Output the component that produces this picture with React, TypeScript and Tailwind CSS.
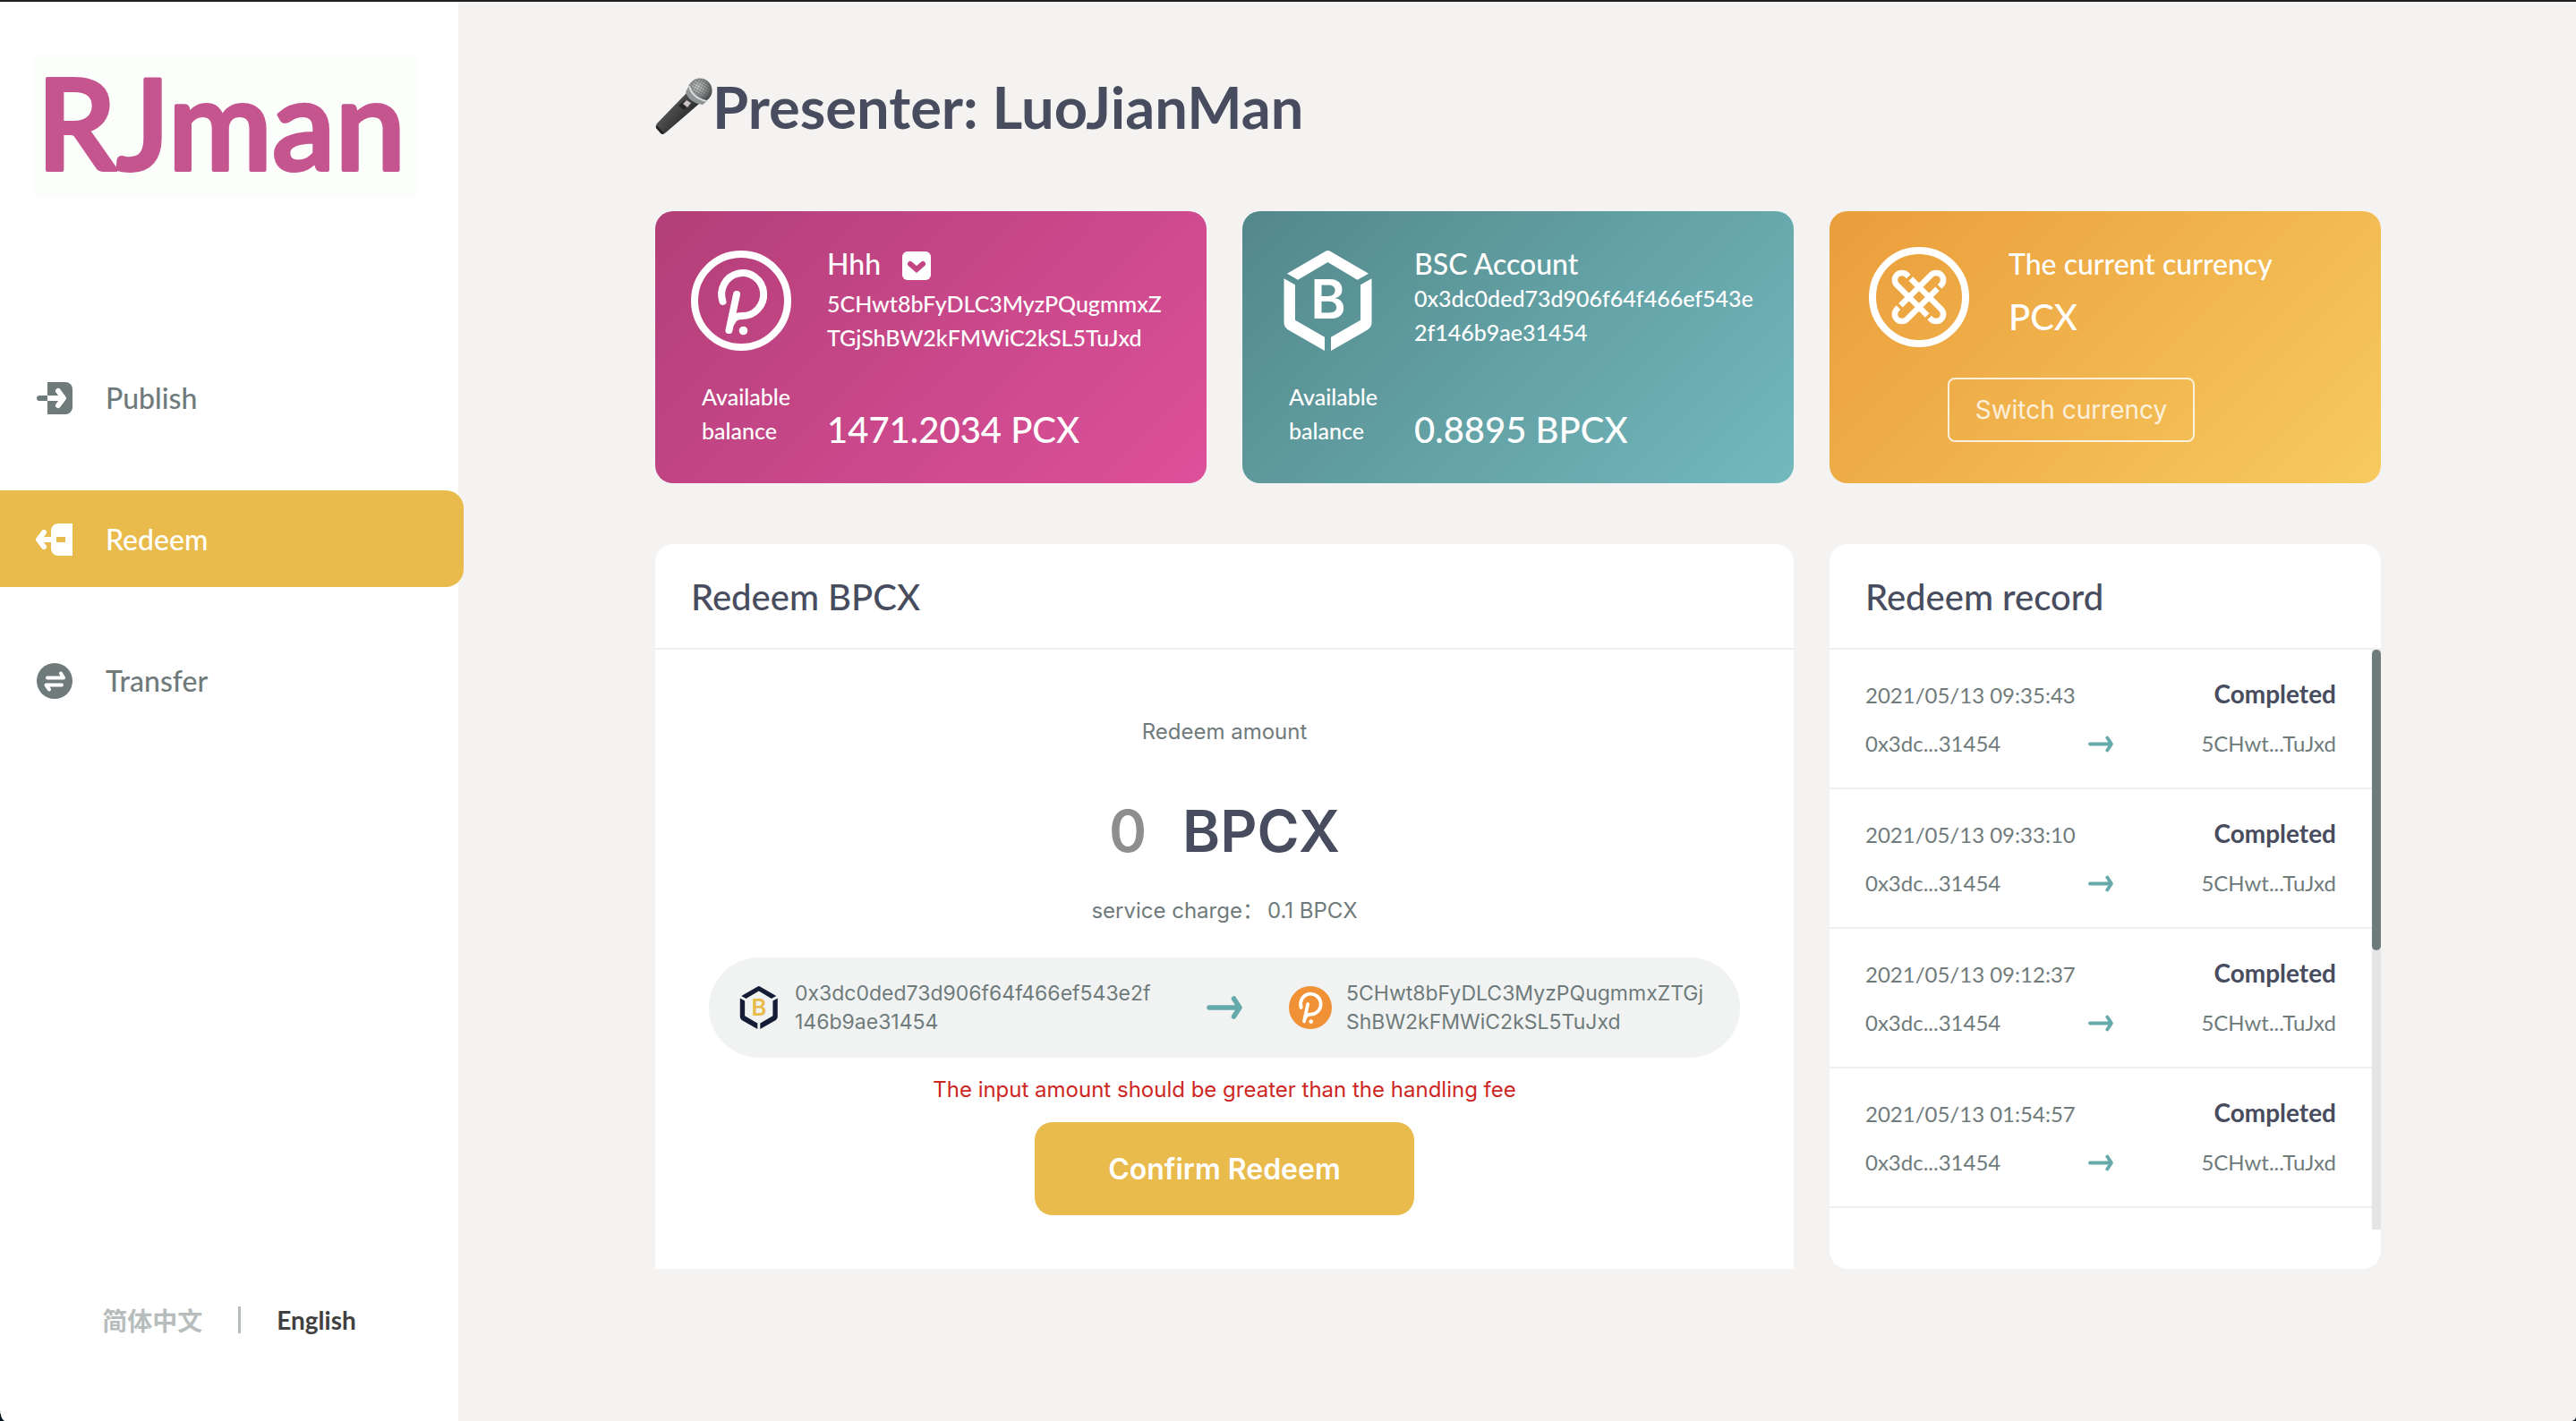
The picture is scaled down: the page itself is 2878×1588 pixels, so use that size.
import React from "react";

const lato = "font-['Lato',sans-serif]";
const inter = "font-['Inter','Noto_Sans_CJK_SC',sans-serif]";

function LogoMark() {
  return (
    <svg viewBox="0 0 428 160" className="h-[160px] w-[428px] overflow-visible bg-[#fcfefc]" role="img" aria-label="RJman">
      <text
        x="3"
        y="128"
        fontSize="140"
        fontWeight="600"
        fill="#c5558f"
        stroke="#c5558f"
        strokeWidth="4"
        strokeLinejoin="round"
        className="font-['Lato',sans-serif]"
      >
        RJman
      </text>
    </svg>
  );
}

function PublishIcon() {
  return (
    <svg viewBox="-1 -3 42 42" className="size-[42px]" fill="none" strokeLinecap="round" strokeLinejoin="round" aria-hidden="true">
      <path d="M12 0H32A8 8 0 0 1 40 8V28A8 8 0 0 1 32 36H12Z" fill="#6f7b7b" />
      <path d="M3 18H9" stroke="#6f7b7b" strokeWidth="6" />
      <path d="M9 15H12V21H9Z" fill="#6f7b7b" />
      <path d="M12 15H27V21H12Z" fill="#fff" />
      <path d="M24 10L30 18L24 26" stroke="#fff" strokeWidth="6" />
      <path d="M25 14L30 18L25 22Z" fill="#fff" />
    </svg>
  );
}

function RedeemIcon() {
  return (
    <svg viewBox="0 -3 42 42" className="size-[42px]" fill="none" strokeLinecap="round" strokeLinejoin="round" aria-hidden="true">
      <path fillRule="evenodd" d="M41 0H25A8 8 0 0 0 17 8V28A8 8 0 0 0 25 36H41ZM23 15H33V21H23Z" fill="#fff" />
      <path d="M4 15H18V21H4Z" fill="#fff" />
      <path d="M9 10L3 18L9 26" stroke="#fff" strokeWidth="6" />
      <path d="M8 14L3 18L8 22Z" fill="#fff" />
    </svg>
  );
}

function TransferIcon() {
  return (
    <svg viewBox="-1 -1 42 42" className="size-[42px]" fill="none" strokeLinecap="round" strokeLinejoin="round" aria-hidden="true">
      <circle cx="20" cy="20" r="20" fill="#6f7b7b" />
      <path d="M12 16.500H30L27 11.500" stroke="#fff" strokeWidth="4" />
      <path d="M28 24.500H10.500L14 29.500" stroke="#fff" strokeWidth="4" />
    </svg>
  );
}

function PolkadotGlyph() {
  return (
    <g>
      <path
        d="M35.500 57A23.500 24 0 1 1 57 73C51 73 47.500 75 45.500 80"
        fill="none"
        stroke="#fff"
        strokeWidth="8"
        strokeLinecap="round"
      />
      <path d="M51 49L42.500 89" fill="none" stroke="#fff" strokeWidth="8" strokeLinecap="round" />
      <circle cx="58.500" cy="89.500" r="4.800" fill="#fff" />
    </g>
  );
}

function PolkadotRing() {
  return (
    <svg viewBox="0 0 112 112" className="size-28 shrink-0" aria-hidden="true">
      <circle cx="56" cy="56" r="52" fill="none" stroke="#fff" strokeWidth="8" />
      <PolkadotGlyph />
    </svg>
  );
}

function PolkadotBadge() {
  return (
    <svg viewBox="0 0 112 112" className="size-12 shrink-0" aria-hidden="true">
      <circle cx="56" cy="56" r="56" fill="#f19135" />
      <g transform="translate(56 56) scale(1.12) translate(-57 -57)">
        <PolkadotGlyph />
      </g>
    </svg>
  );
}

function BscIcon({ className, frame, letter }: { className: string; frame: string; letter: string }) {
  return (
    <svg viewBox="0 0 112 112" className={className} aria-hidden="true">
      <g fill={frame}>
        <path d="M52.500 1Q55.500 -1 58.500 1L101 25.700L88.500 32.700L55.500 13L22 32.700L10 25.700Z" />
        <path d="M6.500 31.300L19 38.300V77.700L52 96.700V112L11 88.500Q6.500 85.500 6.500 80Z" />
        <path d="M104.500 31.300L92 38.300V77.700L59 96.700V112L100 88.500Q104.500 85.500 104.500 80Z" />
      </g>
      <text x="56" y="76" textAnchor="middle" fontSize="60" fontWeight="600" fill={letter} className="font-['Inter',sans-serif]">
        B
      </text>
    </svg>
  );
}

function ChainIcon() {
  const link = "M-21 -8H27A8 8 0 0 1 27 8H24.500M21 8H-27A8 8 0 0 1 -27 -8H-24.500";
  return (
    <svg viewBox="0 0 112 112" className="size-28 shrink-0" fill="none" stroke="#fff" aria-hidden="true">
      <circle cx="56" cy="56" r="52" strokeWidth="8" />
      <path d={link} strokeWidth="6.500" transform="translate(56 56) rotate(45)" />
      <path d={link} strokeWidth="6.500" transform="translate(56 56) rotate(-45)" />
    </svg>
  );
}

function Arrow({ className }: { className: string }) {
  return (
    <svg viewBox="0 0 40 26" className={className} fill="none" stroke="#66a9ab" strokeWidth="5.500" strokeLinecap="round" strokeLinejoin="round" aria-hidden="true">
      <path d="M3 13H36" />
      <path d="M30.500 3L37 13L30.500 23" />
    </svg>
  );
}

function Microphone() {
  return (
    <svg viewBox="0 0 64 64" className="size-16 shrink-0" role="img" aria-label="Microphone">
      <defs>
        <linearGradient id="mic-body" x1="0" y1="0" x2="1" y2="0.800">
          <stop offset="0" stopColor="#6b6b6b" />
          <stop offset="0.450" stopColor="#4a4a4a" />
          <stop offset="1" stopColor="#171717" />
        </linearGradient>
        <radialGradient id="mic-head" cx="0.400" cy="0.350" r="0.700">
          <stop offset="0" stopColor="#d2d4d4" />
          <stop offset="0.550" stopColor="#8b8e8e" />
          <stop offset="1" stopColor="#3f4242" />
        </radialGradient>
        <pattern id="mic-mesh" width="3" height="3" patternUnits="userSpaceOnUse" patternTransform="rotate(30)">
          <path d="M0 0H3M0 0V3" stroke="#3c3f3f" strokeWidth="1" />
        </pattern>
      </defs>
      <path d="M35 17L49 29L12 61Q9 64 7 62L1 56Q0 54 2 51Z" fill="url(#mic-body)" />
      <path d="M1.500 53L10 62Q8 64 6 62L1 56Z" fill="#222" />
      <circle cx="50" cy="14" r="13.500" fill="url(#mic-head)" />
      <circle cx="50" cy="14" r="13.500" fill="url(#mic-mesh)" opacity="0.700" />
      <path d="M38 8Q41 22 58 26L53 30Q38 28 34 16Z" fill="#8f9494" />
      <path d="M38 9Q41 22 57 26" fill="none" stroke="#d9dddd" strokeWidth="2" />
      <path d="M33 25L38 29L32 36L26 31Z" fill="#262626" />
      <path d="M35 25L40 28L36 33L31 29Z" fill="#c9c3c5" />
    </svg>
  );
}

const navItems = [
  { label: "Publish", Icon: PublishIcon, active: false },
  { label: "Redeem", Icon: RedeemIcon, active: true },
  { label: "Transfer", Icon: TransferIcon, active: false },
];

function Sidebar() {
  return (
    <aside className="z-10 flex w-[512px] shrink-0 flex-col rounded-bl-[6px_15px] bg-white">
      <div className="px-[38px] pt-[60px]">
        <LogoMark />
      </div>
      <nav className="mt-[168px] flex flex-col gap-[50px]">
        {navItems.map(({ label, Icon, active }) => (
          <a
            key={label}
            href={"#" + label.toLowerCase()}
            aria-current={active ? "page" : undefined}
            className={
              active
                ? "-mr-[6px] flex h-[108px] items-center gap-9 rounded-r-[20px] bg-[#e9bb4c] pt-0.5 pl-10 text-[32px] leading-[38px] font-medium text-white"
                : "flex h-[108px] items-center gap-9 pt-0.5 pl-10 text-[32px] leading-[38px] font-medium text-[#6f7b7b]"
            }
          >
            <Icon />
            <span>{label}</span>
          </a>
        ))}
      </nav>
      <div className="mt-auto flex items-center justify-center gap-10 pb-24 text-[28px] leading-[34px] font-bold">
        <button type="button" className="font-['Noto_Sans_CJK_SC',sans-serif] text-[#b6bdbc]">简体中文</button>
        <span className="h-[30px] w-[3px] bg-[#b6bdbc]" />
        <button type="button" className="text-[#404040]">English</button>
      </div>
    </aside>
  );
}

function AccountCard({
  tone,
  icon,
  title,
  address,
  balance,
}: {
  tone: string;
  icon: React.ReactNode;
  title: React.ReactNode;
  address: string[];
  balance: string;
}) {
  return (
    <section className={"h-[304px] rounded-[20px] pt-10 font-medium text-white " + tone}>
      <div className="flex min-h-[148px] gap-10 pl-10">
        <div className="pt-1">{icon}</div>
        <div>
          {title}
          {address.map((line) => (
            <p key={line} className="text-[25px] leading-[38px]">{line}</p>
          ))}
        </div>
      </div>
      <div className="flex pl-[52px]">
        <p className="w-[140px] text-[25px] leading-[38px]">
          Available
          <br />
          balance
        </p>
        <p className="pt-8 text-[40px] leading-[48px]">{balance}</p>
      </div>
    </section>
  );
}

const records = ["2021/05/13 09:35:43", "2021/05/13 09:33:10", "2021/05/13 09:12:37", "2021/05/13 01:54:57"];

export default function App() {
  return (
    <div className={"flex min-h-screen border-t-2 border-[#1f1f1f] bg-[#04141c] " + lato}>
      <div className="flex flex-1 rounded-br-[5px] rounded-bl-[6px_15px] bg-[#f4f3f1]">
        <Sidebar />
        <main className="flex-1 pt-[78px] pr-[218px] pl-[220px]">
          <div className="mx-auto w-full max-w-[1928px]">
            <h1 className="flex items-center text-[65px] leading-[78px] font-bold text-[#474c5e]">
              <Microphone />
              <span>Presenter: LuoJianMan</span>
            </h1>

            <div className="mt-[78px] grid grid-cols-3 gap-10">
              <AccountCard
                tone="bg-[linear-gradient(135deg,#b23f78,#de509b)]"
                icon={<PolkadotRing />}
                title={
                  <div className="mb-[6px] flex h-[38px] items-center gap-6">
                    <h2 className="text-[32px] leading-[38px]">Hhh</h2>
                    <button type="button" aria-label="Choose account" className="mt-1">
                      <svg viewBox="0 0 32 32" className="size-8" aria-hidden="true">
                        <rect width="32" height="32" rx="6" fill="#fff" />
                        <path d="M9 14L16 20L23 14" fill="none" stroke="#c44583" strokeWidth="6" strokeLinecap="round" />
                      </svg>
                    </button>
                  </div>
                }
                address={["5CHwt8bFyDLC3MyzPQugmmxZ", "TGjShBW2kFMWiC2kSL5TuJxd"]}
                balance="1471.2034 PCX"
              />
              <AccountCard
                tone="bg-[linear-gradient(135deg,#53888a,#72b9be)]"
                icon={<BscIcon className="size-28 shrink-0" frame="#fff" letter="#fff" />}
                title={<h2 className="text-[32px] leading-[38px]">BSC Account</h2>}
                address={["0x3dc0ded73d906f64f466ef543e", "2f146b9ae31454"]}
                balance="0.8895 BPCX"
              />
              <section className="h-[304px] rounded-[20px] bg-[linear-gradient(135deg,#ea9d3b,#f7ca5f)] pt-10 font-medium text-white">
                <div className="flex min-h-[146px] gap-11 pl-11">
                  <ChainIcon />
                  <div>
                    <h2 className="text-[32px] leading-[38px]">The current currency</h2>
                    <p className="mt-4 text-[40px] leading-[48px]">PCX</p>
                  </div>
                </div>
                <button
                  type="button"
                  className={"ml-[132px] h-[72px] w-[276px] rounded-lg border-2 border-white/80 text-[28px] leading-[34px] font-normal text-white/80 " + inter}
                >
                  Switch currency
                </button>
              </section>
            </div>

            <div className="mt-[68px] grid grid-cols-3 gap-10">
              <section className="col-span-2 rounded-t-[20px] bg-white">
                <h2 className="border-b-2 border-[#eeeeee] px-10 pt-[35px] pb-[33px] text-[40px] leading-[48px] font-medium text-[#474c5e]">Redeem BPCX</h2>
                <form className={"flex flex-col items-center px-[60px] pt-[76px] pb-[60px] text-[24px] leading-[32px] text-[#6f7b7b] " + inter}>
                  <label htmlFor="amount">Redeem amount</label>
                  <div className="mt-[55px] flex items-center gap-10 text-[64px] leading-[80px] font-semibold">
                    <input id="amount" type="text" defaultValue="0" className="w-[42px] bg-transparent text-center text-[#8e8e8e] outline-none" />
                    <span className="text-[#474c5e]">BPCX</span>
                  </div>
                  <p className="mt-[33px]">
                    <span>service charge：</span>
                    <span className="ml-1">0.1 BPCX</span>
                  </p>
                  <div className="mt-9 flex h-28 w-full items-center justify-between rounded-full bg-[#f1f3f3] px-8 text-[23px]">
                    <div className="flex items-center gap-4">
                      <BscIcon className="size-12 shrink-0" frame="#141d35" letter="#e9bb4c" />
                      <p className="w-[408px] whitespace-nowrap">
                        0x3dc0ded73d906f64f466ef543e2f
                        <br />
                        146b9ae31454
                      </p>
                    </div>
                    <Arrow className="h-[26px] w-10" />
                    <div className="flex items-center gap-4">
                      <PolkadotBadge />
                      <p className="w-[408px] whitespace-nowrap">
                        5CHwt8bFyDLC3MyzPQugmmxZTGj
                        <br />
                        ShBW2kFMWiC2kSL5TuJxd
                      </p>
                    </div>
                  </div>
                  <p role="alert" className="mt-5 text-[#cd2724]">The input amount should be greater than the handling fee</p>
                  <button type="button" className="mt-5 h-[104px] w-[424px] rounded-[20px] bg-[#e9bb4c] pt-0.5 text-[32px] leading-[40px] font-semibold text-white">
                    Confirm Redeem
                  </button>
                </form>
              </section>

              <section className="rounded-[20px] bg-white pb-11">
                <h2 className="border-b-2 border-[#eeeeee] px-10 pt-[35px] pb-[33px] text-[40px] leading-[48px] font-medium text-[#474c5e]">Redeem record</h2>
                <div className="flex h-[648px]">
                  <ul className="flex-1">
                    {records.map((time) => (
                      <li key={time} className="border-b-2 border-[#eeeeee] px-10 pt-8 pb-[34px] text-[24px] leading-[30px] text-[#6f7b7b]">
                        <div className="flex items-baseline justify-between">
                          <time>{time}</time>
                          <strong className="text-[28px] leading-[34px] font-bold text-[#474c5e]">Completed</strong>
                        </div>
                        <div className="mt-6 grid grid-cols-[1fr_auto_1fr] items-center">
                          <span>0x3dc...31454</span>
                          <Arrow className="h-[19px] w-7" />
                          <span className="text-right">5CHwt...TuJxd</span>
                        </div>
                      </li>
                    ))}
                  </ul>
                  <div className="w-[10px] bg-[#e5e5e5]">
                    <div className="h-[336px] rounded-full bg-[#6f7b7b]" />
                  </div>
                </div>
              </section>
            </div>
          </div>
        </main>
      </div>
    </div>
  );
}
